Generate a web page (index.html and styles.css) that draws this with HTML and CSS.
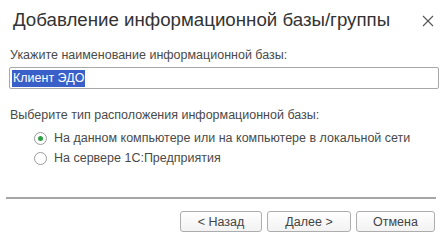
FILE: index.html
```html
<!DOCTYPE html>
<html>
<head>
<meta charset="utf-8">
<link rel="stylesheet" href="styles.css">
</head>
<body>
<div class="dialog">
  <div class="header">
    <div class="title">Добавление информационной базы/группы</div>
    <div class="close">
      <svg width="12" height="12" viewBox="0 0 12 12"><path d="M1 1 L11 11 M11 1 L1 11" stroke="#555" stroke-width="1.1"/></svg>
    </div>
  </div>
  <div class="content">
    <div class="label">Укажите наименование информационной базы:</div>
    <div class="input"><span class="sel">Клиент ЭДО</span></div>
    <div class="label label2">Выберите тип расположения информационной базы:</div>
    <div class="radios">
      <div class="radio-row"><span class="radio checked"></span><span>На данном компьютере или на компьютере в локальной сети</span></div>
      <div class="radio-row"><span class="radio"></span><span>На сервере 1С:Предприятия</span></div>
    </div>
  </div>
  <div class="sep"></div>
  <div class="buttons">
    <div class="btn btn-back">&lt; Назад</div>
    <div class="btn btn-next">Далее &gt;</div>
    <div class="btn btn-cancel">Отмена</div>
  </div>
</div>
</body>
</html>
```
FILE: styles.css
```css
html, body {
  margin: 0;
  padding: 0;
  background: #fff;
}
.dialog {
  width: 447px;
  height: 243px;
  font-family: "Liberation Sans", Arial, sans-serif;
  color: #4a4a4a;
  box-sizing: border-box;
}
.header {
  display: flex;
  justify-content: space-between;
  align-items: center;
  padding: 9px 13px 0 13px;
  height: 22px;
}
.title {
  font-size: 18.7px;
  color: #333;
  white-space: nowrap;
}
.close {
  display: flex;
  margin-top: 1px;
}
.content {
  padding: 17px 8px 0 10px;
}
.label {
  font-size: 12.5px;
  line-height: 15px;
}
.input {
  margin-top: 4px;
  margin-left: -1px;
  height: 20px;
  border: 1px solid #a8a8a8;
  border-radius: 2px;
  display: flex;
  align-items: center;
  padding-left: 2px;
  font-size: 12.5px;
}
.sel {
  background: #3a5fc8;
  color: #fff;
  line-height: 17px;
  padding: 0 1px;
}
.label2 {
  margin-top: 19px;
}
.radios {
  margin-top: 5px;
  padding-left: 24px;
  font-size: 12.5px;
}
.radio-row {
  display: flex;
  align-items: center;
  height: 20px;
  gap: 7px;
}
.radio {
  width: 13px;
  height: 13px;
  box-sizing: border-box;
  border: 1px solid #9c9c9c;
  border-radius: 50%;
  display: inline-flex;
  align-items: center;
  justify-content: center;
  background: #fff;
}
.radio.checked::after {
  content: "";
  width: 5px;
  height: 5px;
  border-radius: 50%;
  background: #2f9e44;
}
.sep {
  margin: 29px 11px 0 6px;
  height: 2px;
  background: #a6a6a6;
}
.buttons {
  display: flex;
  justify-content: flex-end;
  gap: 5px;
  padding: 12px 12px 0 0;
}
.btn {
  height: 21px;
  box-sizing: border-box;
  border: 1px solid #adadad;
  border-radius: 3px;
  background: linear-gradient(#ffffff, #f2f2f2);
  font-size: 12.5px;
  color: #444;
  display: flex;
  align-items: center;
  justify-content: center;
}
.btn-back { width: 82px; }
.btn-next { width: 84px; }
.btn-cancel { width: 79px; }
```
